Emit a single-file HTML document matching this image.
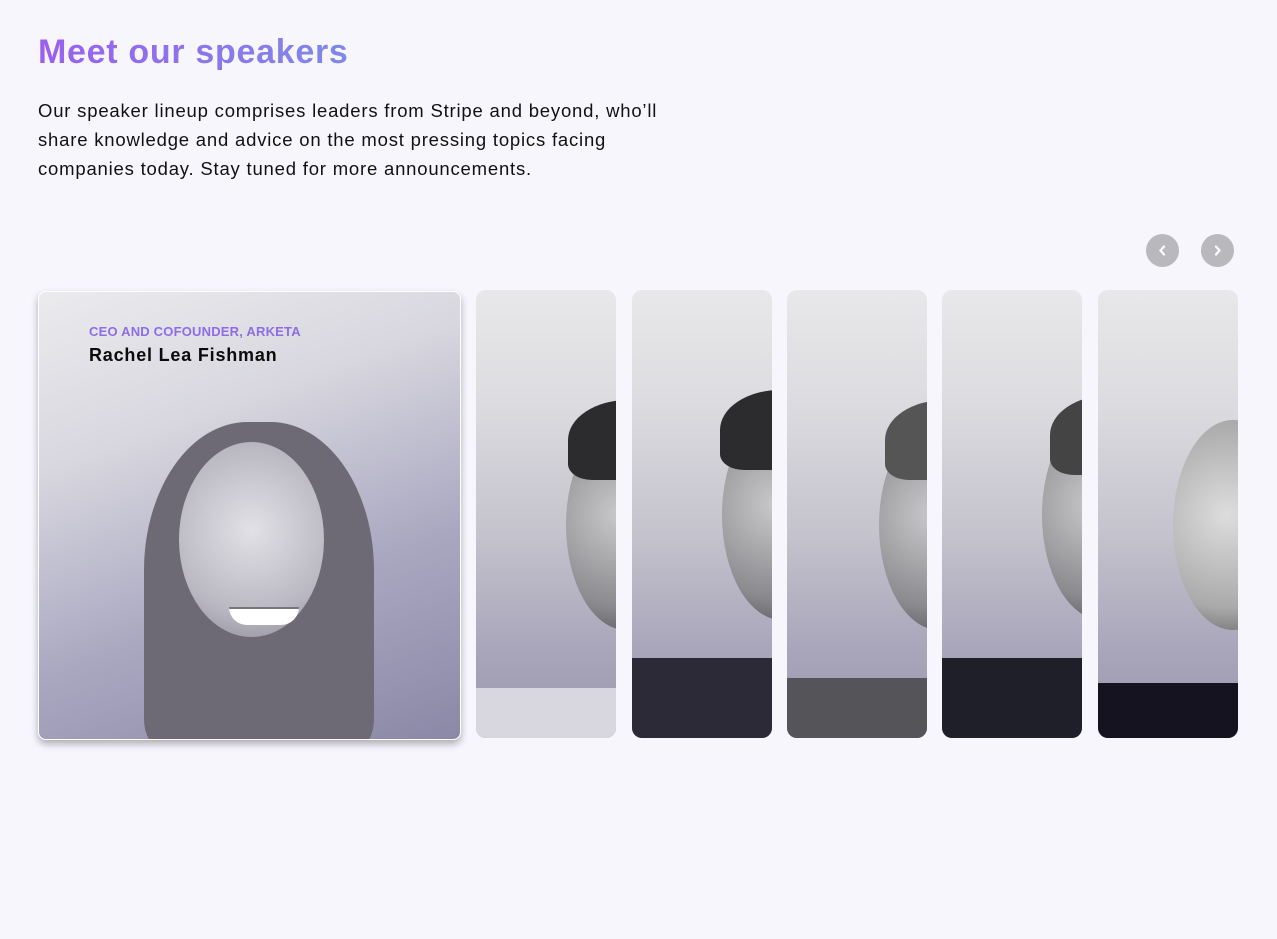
<!DOCTYPE html>
<html><head><meta charset="utf-8"><style>
body{margin:0;background:#f8f6fd;width:1277px;height:939px;overflow:hidden;font-family:"Liberation Sans",sans-serif;position:relative}
h1{position:absolute;left:38px;top:33px;margin:0;font-size:34px;font-weight:700;letter-spacing:0.7px;background:linear-gradient(90deg,#9b5ff0,#7e8ae8);-webkit-background-clip:text;color:transparent}
p{position:absolute;left:38px;top:96px;margin:0;width:700px;font-size:18.5px;line-height:29px;color:#111;letter-spacing:0.8px;white-space:nowrap}
.btn{position:absolute;top:234px;width:33px;height:33px;border-radius:50%;background:#b9b8bd}
.btn svg{position:absolute;left:9px;top:9px}
.card{position:absolute;top:290px;width:140px;height:448px;border-radius:10px;overflow:hidden;background:linear-gradient(180deg,#e8e8ea 0%,#dcdce0 25%,#c4c2cc 55%,#a9a6bb 80%,#9a97ad 100%)}
.card .shirt{position:absolute;left:0;right:0;bottom:0;height:80px;background:#2b2a36}
.card .face{position:absolute;width:120px;height:210px;border-radius:50%;background:radial-gradient(circle at 45% 45%,#c9c9cb,#8a8a8e 70%,#55555a)}
.card .hair{position:absolute;width:120px;height:80px;border-radius:50% 50% 20% 20%;background:#2c2c2e}
.big{position:absolute;left:38px;top:291px;width:421px;height:447px;border-radius:8px;overflow:hidden;border:1px solid #fff;box-shadow:0 4px 8px rgba(0,0,0,.3);background:linear-gradient(160deg,#ebebee 0%,#d8d7df 30%,#a9a7c0 65%,#8a88a6 100%)}
.role{position:absolute;left:50px;top:32px;font-size:13px;font-weight:700;color:#8d6de6;letter-spacing:0.2px}
.name{position:absolute;left:50px;top:53px;font-size:18px;font-weight:700;color:#0b0b0b;letter-spacing:0.8px}
</style></head><body>
<h1>Meet our speakers</h1>
<p>Our speaker lineup comprises leaders from Stripe and beyond, who’ll<br>share knowledge and advice on the most pressing topics facing<br>companies today. Stay tuned for more announcements.</p>
<div class="btn" style="left:1146px"><svg width="15" height="15" viewBox="0 0 15 15"><path d="M9 3.5L5.5 7.5L9 11.5" stroke="#fff" stroke-width="2.2" fill="none" stroke-linecap="round"/></svg></div>
<div class="btn" style="left:1201px"><svg width="15" height="15" viewBox="0 0 15 15"><path d="M6 3.5L9.5 7.5L6 11.5" stroke="#fff" stroke-width="2.2" fill="none" stroke-linecap="round"/></svg></div>
<div class="big">
 <div style="position:absolute;left:105px;top:130px;width:230px;height:330px;border-radius:45% 45% 10% 10%;background:#6e6a75"></div>
 <div style="position:absolute;left:140px;top:150px;width:145px;height:195px;border-radius:50%;background:radial-gradient(circle at 50% 45%,#e2e1e6,#b9b7c1 65%,#8e8b98)"></div>
 <div style="position:absolute;left:190px;top:315px;width:70px;height:16px;border-radius:0 0 30px 30px;background:#fff;border-top:2px solid #777"></div>
 <div class="role">CEO AND COFOUNDER, ARKETA</div>
 <div class="name">Rachel Lea Fishman</div>
</div>
<div class="card" style="left:476px"><div class="face" style="left:90px;top:130px"></div><div class="hair" style="left:92px;top:110px"></div><div class="shirt" style="background:#d8d6de;height:50px"></div></div>
<div class="card" style="left:632px"><div class="face" style="left:90px;top:120px"></div><div class="hair" style="left:88px;top:100px"></div><div class="shirt"></div></div>
<div class="card" style="left:787px"><div class="face" style="left:92px;top:130px"></div><div class="hair" style="left:98px;top:110px;background:#555"></div><div class="shirt" style="background:#555459;height:60px"></div></div>
<div class="card" style="left:942px"><div class="face" style="left:100px;top:120px"></div><div class="hair" style="left:108px;top:105px;background:#444"></div><div class="shirt" style="background:#1f1f2a"></div></div>
<div class="card" style="left:1098px"><div class="face" style="left:75px;top:130px;background:radial-gradient(circle at 45% 45%,#ddd,#aaa 70%,#666)"></div><div class="shirt" style="background:#151320;height:55px"></div></div>
</body></html>
